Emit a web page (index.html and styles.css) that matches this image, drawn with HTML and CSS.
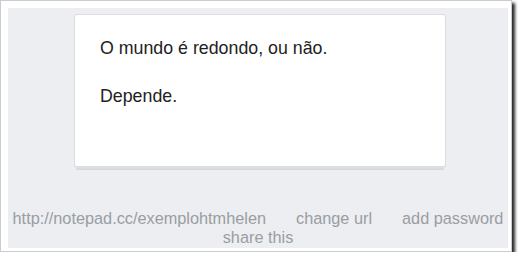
FILE: index.html
```html
<!DOCTYPE html>
<html>
<head>
<meta charset="utf-8">
<link rel="stylesheet" href="styles.css">
</head>
<body>
<div class="frame">
  <div class="page">
    <div class="note">
      <p>O mundo é redondo, ou não.</p>
      <p>Depende.</p>
    </div>
    <div class="links">
      <span class="link">http://notepad.cc/exemplohtmhelen</span>
      <span class="link">change url</span>
      <span class="link">add password</span>
      <span class="link">share this</span>
    </div>
  </div>
</div>
</body>
</html>
```
FILE: styles.css
```css
html, body {
  margin: 0;
  padding: 0;
  background: #ffffff;
}
.frame {
  box-sizing: border-box;
  width: 512px;
  height: 252px;
  padding: 7px 3px 3px 7px;
  border: 1px solid #cccccc;
  background: #ffffff;
  box-shadow: 3px 3px 3px rgba(0, 0, 0, 0.85);
}
.page {
  width: 500px;
  height: 240px;
  background: #eceef1;
  display: flex;
  flex-direction: column;
  align-items: flex-start;
  font-family: "Liberation Sans", Arial, sans-serif;
}
.note {
  box-sizing: border-box;
  width: 372px;
  height: 153px;
  margin-top: 6px;
  margin-left: 66px;
  padding: 21px 25px;
  background: #ffffff;
  border: 1px solid #dcdde0;
  border-radius: 3px;
  color: #222222;
  font-size: 17.8px;
  line-height: 24px;
  box-shadow:
    0 1px 0 #dfe0e3,
    0 2px 0 -1px #ffffff,
    0 3px 0 -1px #dadbde,
    0 4px 0 -2px #ffffff,
    0 5px 0 -2px #d6d7da;
}
.note p {
  margin: 0 0 24px 0;
}
.links {
  width: 500px;
  margin-top: 42px;
  display: flex;
  flex-wrap: wrap;
  justify-content: center;
  column-gap: 30px;
  color: #9a9da3;
  font-size: 16.3px;
  line-height: 19px;
}
```
